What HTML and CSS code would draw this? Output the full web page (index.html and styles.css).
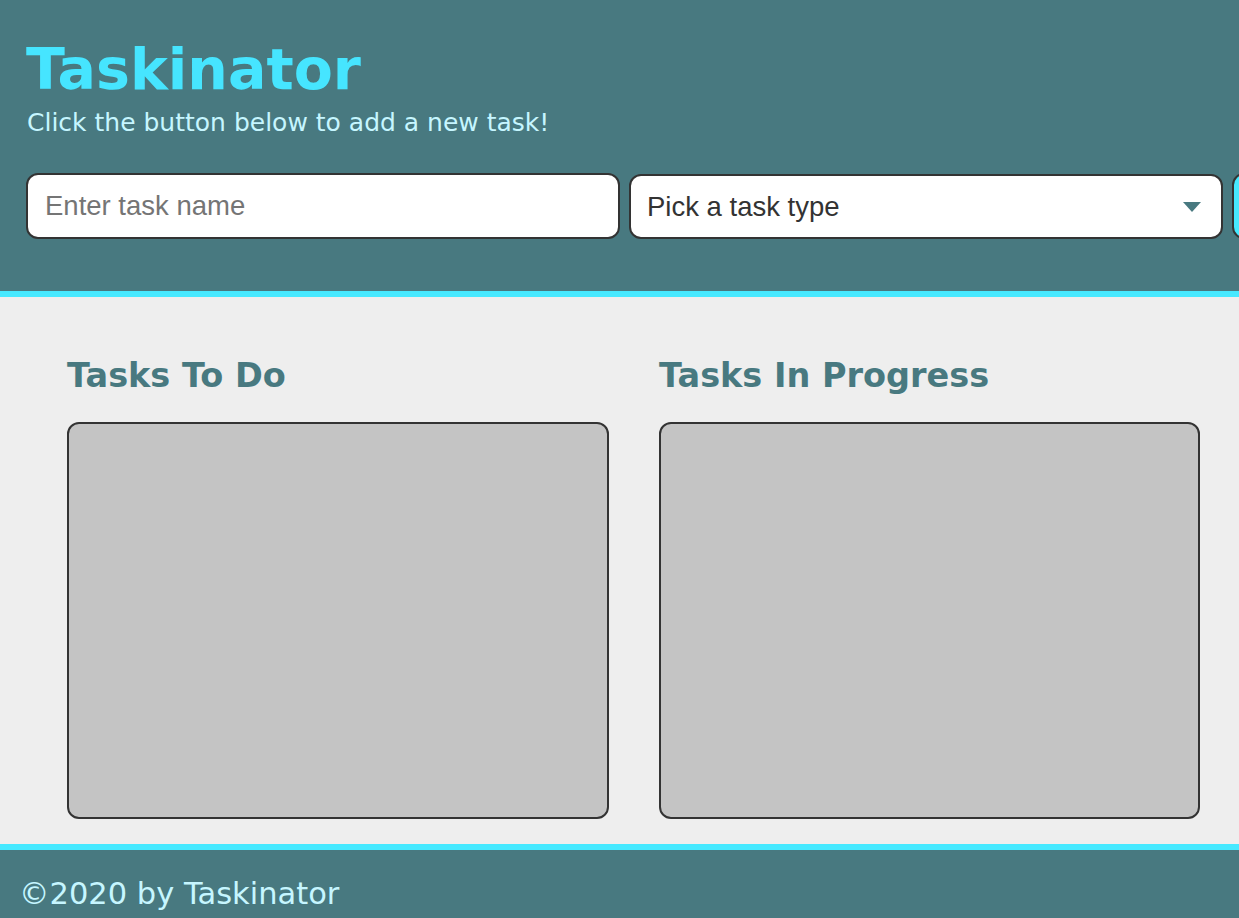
FILE: index.html
```html
<!DOCTYPE html>
<html lang="en">
<head>
<meta charset="utf-8">
<title>Taskinator</title>
<link rel="stylesheet" href="styles.css">
</head>
<body>
<header class="header">
  <h1 class="page-title">Taskinator</h1>
  <p class="subtitle">Click the button below to add a new task!</p>
  <form class="task-form">
    <input class="text-input" type="text" placeholder="Enter task name">
    <div class="select-wrap">
      <span class="select-text">Pick a task type</span>
      <svg class="select-arrow" width="18" height="10" viewBox="0 0 18 10"><path d="M0 0 H18 L9 10 Z" fill="#487980"/></svg>
    </div>
    <button class="btn" type="button" aria-label="Add Task"></button>
  </form>
</header>
<main class="page-content">
  <section class="task-list-wrapper">
    <h2 class="list-title">Tasks To Do</h2>
    <div class="task-list"></div>
  </section>
  <section class="task-list-wrapper">
    <h2 class="list-title">Tasks In Progress</h2>
    <div class="task-list"></div>
  </section>
</main>
<footer class="footer">
  <p class="footer-text">&copy;2020 by Taskinator</p>
</footer>
</body>
</html>
```
FILE: styles.css
```css
* { box-sizing: border-box; }
html, body { margin: 0; padding: 0; }
body {
  font-family: "DejaVu Sans", Verdana, sans-serif;
  background: #eeeeee;
  overflow: hidden;
}
.header {
  background: #487980;
  border-bottom: 6px solid #46e9ff;
  height: 297px;
  padding: 37px 0 0 26px;
  overflow: hidden;
}
.page-title {
  margin: 0;
  color: #46e5ff;
  font-size: 57px;
  font-weight: bold;
  line-height: 64px;
}
.subtitle {
  margin: 7px 0 0 1px;
  color: #c6f6ff;
  font-size: 25px;
  line-height: 30px;
}
.task-form {
  display: flex;
  gap: 9px;
  margin-top: 35px;
  width: 1500px;
}
.text-input, .select-wrap {
  width: 594px;
  height: 66px;
  border: 2px solid #333;
  border-radius: 12px;
  background: #fff;
  font-family: "Liberation Sans", Arial, sans-serif;
  font-size: 27.5px;
  padding: 0 17px;
  flex: none;
}
.text-input::placeholder { color: #757575; }
.select-wrap {
  display: flex;
  align-items: center;
  justify-content: space-between;
  color: #333;
  margin-top: 1px;
  height: 65px;
  padding: 0 20px 0 16px;
}
.btn {
  width: 220px;
  height: 66px;
  flex: none;
  background: #46e9ff;
  border: 2px solid #333;
  border-radius: 12px;
}
.page-content {
  display: grid;
  grid-template-columns: 542px 541px;
  column-gap: 50px;
  padding: 56px 0 25px 67px;
}
.list-title {
  margin: 0;
  color: #487980;
  font-size: 33.5px;
  font-weight: bold;
  line-height: 46px;
}
.task-list {
  margin-top: 23px;
  height: 397px;
  background: #c4c4c4;
  border: 2px solid #333;
  border-radius: 12px;
}
.footer {
  background: #487980;
  border-top: 6px solid #46e9ff;
  height: 74px;
  padding: 26px 0 0 19px;
}
.footer-text {
  margin: 0;
  color: #c6f6ff;
  font-size: 30.5px;
  line-height: 36px;
}
```
